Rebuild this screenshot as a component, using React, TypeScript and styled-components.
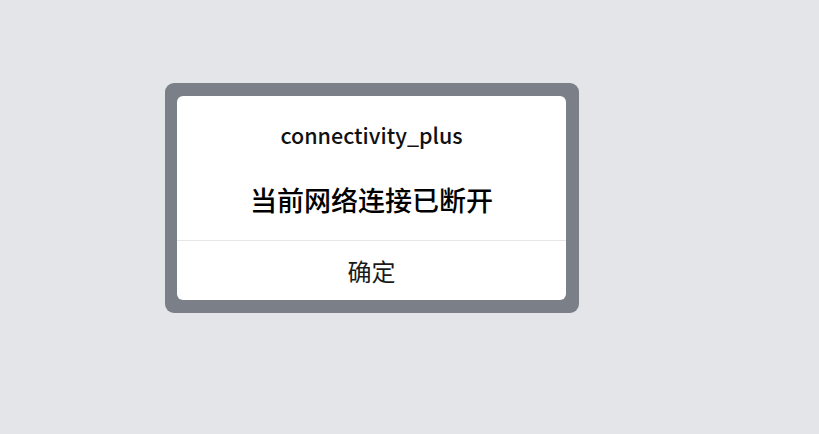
import styled, { createGlobalStyle } from "styled-components";

const GlobalStyle = createGlobalStyle`
    html, body {
        margin: 0;
        padding: 0;
        background: #e3e5e8;
    }
    body {
        font-family: "Noto Sans CJK SC", "Noto Sans", sans-serif;
    }
`;

function App(){
    return(
        <>
            <GlobalStyle />
            <Page>
                <Frame>
                    <Dialog>
                        <Content>
                            <Title>connectivity_plus</Title>
                            <Message>当前网络连接已断开</Message>
                        </Content>
                        <ActionBtn>确定</ActionBtn>
                    </Dialog>
                </Frame>
            </Page>
        </>
    );
}

export default App;

const Page = styled.div`
    width: 819px;
    height: 434px;
    box-sizing: border-box;
    padding: 83px 0 0 165px;
    display: flex;
    align-items: flex-start;
    background: #e3e5e8;
`;

const Frame = styled.div`
    width: 414px;
    height: 230px;
    box-sizing: border-box;
    padding: 13px 13px 13px 12px;
    background: #7b8088;
    border-radius: 9px;
    display: flex;
`;

const Dialog = styled.div`
    flex: 1;
    background: #ffffff;
    border-radius: 6px;
    display: flex;
    flex-direction: column;
    overflow: hidden;
`;

const Content = styled.div`
    height: 145px;
    box-sizing: border-box;
    padding-top: 24px;
    display: flex;
    flex-direction: column;
    align-items: center;
    border-bottom: 1px solid #e6e6e6;
`;

const Title = styled.div`
    font-size: 21.5px;
    line-height: 30px;
    color: #111;
    font-weight: 500;
`;

const Message = styled.div`
    margin-top: 31px;
    font-size: 27px;
    line-height: 38px;
    color: #000;
    font-weight: 500;
`;

const ActionBtn = styled.div`
    flex: 1;
    display: flex;
    justify-content: center;
    align-items: center;
    font-size: 24px;
    color: #1a1a1a;
`;
